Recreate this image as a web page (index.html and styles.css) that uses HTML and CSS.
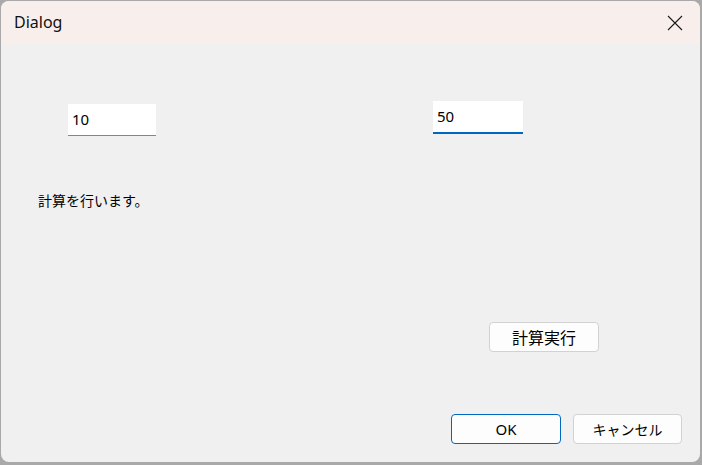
FILE: index.html
```html
<!DOCTYPE html>
<html lang="ja">
<head>
<meta charset="utf-8">
<title>Dialog</title>
<link rel="stylesheet" href="styles.css">
</head>
<body>
<div class="window">
  <div class="titlebar">
    <span class="title">Dialog</span>
    <span class="close">
      <svg width="16" height="16" viewBox="0 0 16 16"><path d="M1 1 L15 15 M15 1 L1 15" stroke="#1a1a1a" stroke-width="1.1" fill="none"/></svg>
    </span>
  </div>
  <div class="content">
    <div class="inputs">
      <div class="textbox tb1">10</div>
      <div class="textbox tb2 focused">50</div>
    </div>
    <div class="label">計算を行います。</div>
    <div class="calc-row">
      <button class="btn calc">計算実行</button>
    </div>
    <div class="footer">
      <button class="btn ok">OK</button>
      <button class="btn cancel">キャンセル</button>
    </div>
  </div>
</div>
</body>
</html>
```
FILE: styles.css
```css
* { box-sizing: border-box; }
html, body { margin: 0; padding: 0; }
body {
  width: 702px;
  height: 465px;
  background: #a9a9a9;
  padding: 1px 1px 3px 1px;
  font-family: "Noto Sans", "Noto Sans CJK JP", sans-serif;
  color: #000;
  overflow: hidden;
}
.window {
  width: 699px;
  height: 461px;
  background: #f0f0f0;
  border-radius: 8px;
  overflow: hidden;
  display: flex;
  flex-direction: column;
}
.titlebar {
  height: 43px;
  background: #f8efed;
  display: flex;
  align-items: center;
  justify-content: space-between;
  padding: 0 17px 0 13px;
}
.title {
  font-size: 16px;
  font-family: "Noto Sans", sans-serif;
  color: #111;
  margin-top: -2px;
}
.close { display: flex; margin-top: 1px; }
.content {
  flex: 1;
  display: flex;
  flex-direction: column;
  padding: 57px 0 0 0;
}
.inputs {
  display: flex;
  align-items: flex-start;
  padding-left: 67px;
}
.textbox {
  background: #fff;
  font-family: "Noto Sans", sans-serif;
  font-size: 15px;
  line-height: 20px;
  padding: 5px 4px 0 4px;
}
.tb1 {
  width: 88px;
  height: 32px;
  margin-top: 3px;
  border-bottom: 1px solid #858585;
}
.tb2 {
  width: 90px;
  height: 33px;
  margin-left: 277px;
  border-bottom: 2px solid #0067c0;
}
.label {
  margin: 54px 0 0 37px;
  font-family: "Noto Sans CJK JP", sans-serif;
  font-size: 14px;
  line-height: 20px;
}
.btn {
  font-family: "Noto Sans", "Noto Sans CJK JP", sans-serif;
  background: #fdfdfd;
  border: 1px solid #d2d2d2;
  border-radius: 4px;
  height: 30px;
  padding: 0;
  color: #000;
}
.calc-row {
  display: flex;
  padding-left: 488px;
  margin-top: 112px;
}
.calc {
  width: 110px;
  font-family: "Noto Sans CJK JP", sans-serif;
  font-size: 16px;
}
.footer {
  display: flex;
  gap: 12px;
  padding-left: 450px;
  margin-top: 62px;
}
.ok {
  width: 110px;
  border-color: #0067c0;
  font-size: 15px;
}
.cancel {
  width: 109px;
  font-family: "Noto Sans CJK JP", sans-serif;
  font-size: 14px;
}
```
